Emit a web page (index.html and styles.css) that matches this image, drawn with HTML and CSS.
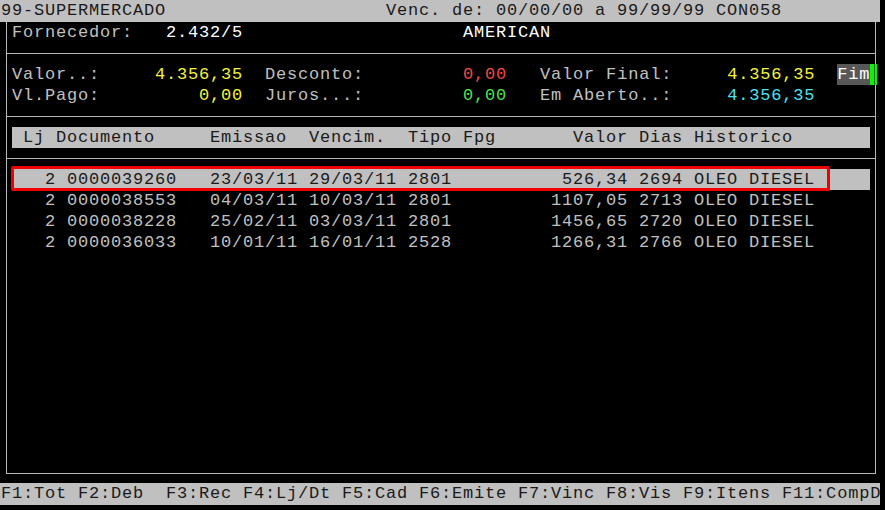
FILE: index.html
```html
<!DOCTYPE html>
<html lang="pt-BR">

<head>
    <meta charset="UTF-8">
    <meta name="viewport" content="width=device-width, initial-scale=1.0">
    <title>CON058 - Contas a pagar</title>
    <link rel="stylesheet" href="styles.css">
</head>

<body>
    <div class="screen">
        <div class="bar">99-SUPERMERCADO                    Venc. de: 00/00/00 a 99/99/99 CON058</div>

        <div class="frame">
            <div class="row">Fornecedor:   <span class="hi">2.432/5</span>                    <span class="hi">AMERICAN</span></div>
            <div class="sep"></div>
            <div class="row">Valor..:     <span class="yellow">4.356,35</span>  Desconto:         <span class="red">0,00</span>   Valor Final:     <span class="yellow">4.356,35</span>  <span class="fim">Fim</span></div>
            <div class="row">Vl.Pago:         <span class="yellow">0,00</span>  Juros...:         <span class="green">0,00</span>   Em Aberto..:     <span class="cyan">4.356,35</span></div>
            <div class="sep"></div>
            <div class="row head"> Lj Documento     Emissao  Vencim.  Tipo Fpg       Valor Dias Historico</div>
            <div class="sep"></div>
            <!-- linha selecionada -->
            <div class="row selected">   2 0000039260   23/03/11 29/03/11 2801          526,34 2694 OLEO DIESEL<span class="mark"></span></div>
            <div class="row">   2 0000038553   04/03/11 10/03/11 2801         1107,05 2713 OLEO DIESEL</div>
            <div class="row">   2 0000038228   25/02/11 03/03/11 2801         1456,65 2720 OLEO DIESEL</div>
            <div class="row">   2 0000036033   10/01/11 16/01/11 2528         1266,31 2766 OLEO DIESEL</div>
        </div>

        <div class="bar keys">F1:Tot F2:Deb  F3:Rec F4:Lj/Dt F5:Cad F6:Emite F7:Vinc F8:Vis F9:Itens F11:CompD</div>
    </div>
</body>

</html>
```

FILE: styles.css
```css
body {
    margin: 0;
    background-color: #000;
    font-family: "Liberation Mono", "DejaVu Sans Mono", monospace;
    font-size: 17px;
    letter-spacing: 0.8px;
    color: #c0c0c0;
}

.screen {
    width: 885px;
    height: 510px;
    overflow: hidden;
}

.bar {
    width: 879px;
    height: 22px;
    line-height: 22px;
    padding-left: 1px;
    background-color: #c0c0c0;
    color: #1a1a1a;
    white-space: pre;
}

.keys {
    margin-top: 9px;
}

.frame {
    width: 858px;
    height: 451px;
    margin-left: 6px;
    padding: 0 5px;
    border-left: 1px solid #b8b8b8;
    border-right: 1px solid #b8b8b8;
    border-bottom: 1px solid #b8b8b8;
}

.row {
    height: 21px;
    line-height: 21px;
    white-space: pre;
}

.sep {
    height: 21px;
    margin: 0 -5px;
    display: flex;
    align-items: center;
}

.sep::before {
    content: '';
    flex: 1;
    border-top: 1px solid #b8b8b8;
}

.hi {
    color: #fff;
}

.yellow {
    color: #f4f43c;
}

.red {
    color: #f04848;
}

.green {
    color: #50e050;
}

.cyan {
    color: #50e0f0;
}

.fim {
    position: relative;
    display: inline-block;
    background-color: #585858;
    color: #fff;
}

.fim::after {
    content: '';
    position: absolute;
    left: 100%;
    top: 0;
    width: 7px;
    height: 100%;
    background: linear-gradient(to right, #10f010 0, #10f010 4px, #107010 4px, #107010 5px, #10f010 5px);
}

.head,
.selected {
    background-color: #c0c0c0;
    color: #1a1a1a;
}

.selected {
    position: relative;
}

.mark {
    position: absolute;
    left: -1px;
    top: -3px;
    width: 813px;
    height: 19px;
    border: 3px solid #f00000;
    border-radius: 2px;
}
```
